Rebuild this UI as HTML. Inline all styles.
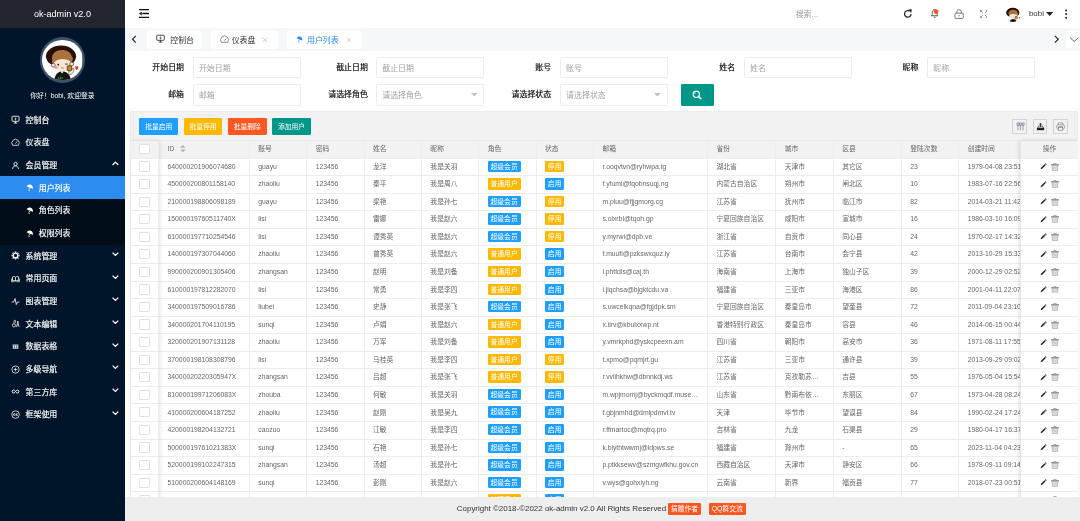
<!DOCTYPE html>
<html lang="zh-CN">
<head>
<meta charset="utf-8">
<title>ok-admin v2.0</title>
<style>
*{box-sizing:border-box;margin:0;padding:0}
html,body{width:1080px;height:521px;overflow:hidden;background:#fff}
body{font-family:"Liberation Sans","Noto Sans CJK SC",sans-serif;font-size:14px;color:#333;-webkit-font-smoothing:antialiased}
#app{position:absolute;left:0;top:0;width:1903px;height:918px;zoom:0.567525;overflow:hidden;background:#fff;will-change:transform}
i{font-style:normal}
/* ---------- sidebar ---------- */
#side{position:absolute;left:0;top:0;width:220px;height:918px;background:#001529;color:#fff}
#logo{position:absolute;left:0;top:0;width:220px;height:49px;line-height:51px;background:#23262e;text-align:center;font-size:16px;color:#fff}
#user{position:absolute;left:0;top:50px;width:220px;text-align:center}
#user .av{position:absolute;left:70px;top:16px;width:80px;height:80px;border-radius:50%;background:#3d5269;overflow:hidden}
#user .av svg{display:block;width:71px;height:71px;margin:4.5px;border-radius:50%}
#user p{position:absolute;left:0;top:108px;width:220px;font-size:12px;line-height:20px;color:#fff}
#nav{position:absolute;left:0;top:191px;width:220px;list-style:none}
#nav li{position:relative;height:40px;line-height:40px;font-size:14px;color:#fff;white-space:nowrap;-webkit-text-stroke:.3px #fff}
#nav li .mi{position:absolute;left:19.500px;top:12px;width:16px;height:16px}
#nav li .tx{position:absolute;left:45px;top:2px}
#nav li.sub{background:#000c17}
#nav li.sub .mi{left:46px;top:14px;width:13px;height:13px}
#nav li.sub .tx{left:68.200px}
#nav li.on{background:#2d8cf0}
#nav li .arr{position:absolute;left:197px;top:13px;width:12px;height:8px}
#nav svg{display:block;width:100%;height:100%}
/* ---------- header ---------- */
#head{position:absolute;left:220px;top:0;width:1683px;height:50px;background:#fff}
#head .h{position:absolute}
#head svg{display:block}
#search{left:1182px;top:15px;font-size:14px;line-height:20px;color:#999}
#uname{left:1593px;top:14px;font-size:14px;line-height:22px;color:#333}
/* ---------- tab bar ---------- */
#tabs{position:absolute;left:220px;top:49px;width:1683px;height:41px;background:#f5f7f9}
#tabs .tab{position:absolute;top:5px;height:32px;line-height:32px;background:#fff;border-radius:4px;font-size:14px;color:#333;white-space:nowrap}
#tabs .tab .ti{position:absolute;top:8px;width:16px;height:16px}
#tabs .tab .tt{position:absolute;top:2.300px}
#tabs .tab .tc{position:absolute;top:11px;width:10px;height:10px}
#tabs .tab.on{color:#2d8cf0}
#tabs .pg{position:absolute}
#tabs svg{display:block;width:100%;height:100%}
/* ---------- form ---------- */
#page{position:absolute;left:220px;top:90px;width:1683px;height:785px;background:#fff;overflow:hidden}
.fl{position:absolute;width:110px;height:38px;line-height:40.500px;padding-right:15.700px;text-align:right;font-size:14px;color:#000;-webkit-text-stroke:.25px #000;white-space:nowrap}
.fi{position:absolute;width:190px;height:38px;line-height:38.500px;border:1px solid #ededed;border-radius:2px;padding-left:8.800px;font-size:14px;color:#a3a3a3;background:#fff;white-space:nowrap}
.fi .car{position:absolute;right:10px;top:15px;width:12px;height:6px}
.fi .car svg{display:block;width:12px;height:6px}
#sbtn{position:absolute;left:980px;top:58px;width:58px;height:38px;background:#009688;border-radius:2px}
#sbtn svg{position:absolute;left:20px;top:10px;width:18px;height:18px}
/* ---------- table ---------- */
#tool{position:absolute;left:9px;top:106px;width:1671px;height:52.5px;background:#f2f2f2;border:1px solid #ebebeb}
.btn{position:absolute;top:9.500px;height:30px;line-height:30px;width:68px;text-align:center;font-size:12px;color:#fff;border-radius:2px;white-space:nowrap}
.tb{position:absolute;top:12px;width:26px;height:26px;border:1px solid #d4d4d4}
.tb svg{display:block;width:16px;height:16px;margin:4px}
#tw{position:absolute;left:9px;top:158.5px;width:1671px;height:640px;overflow:hidden;border-left:1px solid #ebebeb}
table.grid{border-collapse:separate;border-spacing:0;table-layout:fixed;width:0;font-size:12px;color:#666}
table.grid th,table.grid td{height:30.950px;border-right:1px solid #ededed;border-bottom:1px solid #ededed;padding:0;font-weight:400;text-align:left;overflow:hidden;background:#fff}
table.grid th{background:#f2f2f2;height:31px}
.cell{height:29px;line-height:28px;padding:0 15px;white-space:nowrap;overflow:hidden;text-overflow:ellipsis}
table.grid .c-chk{text-align:center;vertical-align:top}
.cb{display:block;width:18px;height:18px;margin:5px auto 0 15px;border:1px solid #e0e0e0;border-radius:2px;background:#fff}
.sort{display:inline-block;width:10px;height:13px;margin-left:10px;vertical-align:-2px}
.sort svg{display:block;width:10px;height:13px}
.tag{display:inline-block;height:20px;line-height:20px;padding:0 5px;font-size:12px;color:#fff;border-radius:2px;vertical-align:middle;margin-top:-2px}
.tag.blue{background:#1e9fff}
.tag.yel{background:#ffb800}
#fxl{position:absolute;left:9px;top:158.5px;width:51px;height:640px;box-shadow:1px 0 8px rgba(0,0,0,.1);pointer-events:none}
#fxr{position:absolute;left:1578px;top:158.5px;width:102px;height:640px;overflow:hidden;box-shadow:-1px 0 8px rgba(0,0,0,.12);background:#fff;border-left:1px solid #e6e6e6}
#fxr table.grid{width:101px}
#fxr .ops{text-align:left;padding:0 0 0 33px}
.ops svg{display:inline-block;vertical-align:middle;margin-top:-1px}
.ic-pen{width:12px;height:12px;margin-right:7px}
.ic-del{width:14px;height:14px}
/* ---------- footer ---------- */
#foot{position:absolute;left:220px;top:875px;width:1683px;height:43px;background:#eee;font-size:14px;color:#333;line-height:43px;white-space:nowrap}
#foot .cp{position:absolute;left:585px;top:1px}
#foot .fb{position:absolute;top:12px;height:20px;line-height:20px;font-size:12px;color:#fff;background:#ff5722;border-radius:2px;text-align:center}
</style>
</head>
<body>
<div id="app">

<!-- sidebar -->
<div id="side">
  <div id="logo">ok-admin v2.0</div>
  <div id="user">
    <div class="av">
      <svg viewBox="0 0 72 72">
        <rect width="72" height="72" fill="#fff"/>
        <ellipse cx="34" cy="29" rx="27" ry="19" fill="#2a0f08"/>
        <path d="M18 34c-2-20 34-22 36-2v10H18z" fill="#a8733f"/>
        <ellipse cx="37" cy="45" rx="17" ry="11" fill="#fbe6d5"/>
        <path d="M19 36c8-3 26-3 36 0v-5H19z" fill="#a8733f"/>
        <circle cx="20" cy="45" r="3.5" fill="#fbe6d5" stroke="#2a0f08" stroke-width="1"/>
        <circle cx="53" cy="43" r="3.5" fill="#fbe6d5" stroke="#2a0f08" stroke-width="1"/>
        <circle cx="29" cy="44" r="1.6" fill="#2a0f08"/>
        <path d="M41 43h5" stroke="#2a0f08" stroke-width="1.4"/>
        <ellipse cx="25" cy="49" rx="3" ry="2" fill="#f58a7a"/>
        <path d="M34 50h5" stroke="#7a3b2a" stroke-width="1"/>
        <path d="M22 72c1-11 8-16 14-16s14 4 16 16z" fill="#151515"/>
        <path d="M33 56l3 4 3-4z" fill="#fff"/>
        <rect x="45" y="46" width="8" height="9" rx="1" fill="#b88a2a" stroke="#3a2208" stroke-width="1.2"/>
        <path d="M48 56c3 0 7-2 7-6l2 1c0 8-4 11-9 11z" fill="#fbe6d5" stroke="#2a0f08" stroke-width=".8"/>
        <path d="M62 54c-3-3-4-6-2-7 1.500-.7 2 .5 2 1.500 0-1 1-2.200 2.300-1.500 2 1.200 0 4.500-2.300 7z" fill="#e8352b"/>
        <path d="M30 66v4M33 66v4M36 66v4" stroke="#3fae5a" stroke-width="1.4"/>
      </svg>
    </div>
    <p>你好！bobi, 欢迎登录</p>
  </div>
  <ul id="nav">
    <li><span class="mi"><svg viewBox="0 0 18 18" fill="none" stroke="#fff" stroke-width="1.7"><rect x="2" y="2.500" width="14" height="10" rx="1.500"/><path d="M5.500 16h7M9 12.500V16"/><path d="M9 5v4.500M7 7.500l2 2 2-2" stroke-width="1.300"/></svg></span><span class="tx">控制台</span></li>
    <li><span class="mi"><svg viewBox="0 0 18 18" fill="none" stroke="#fff" stroke-width="1.500"><path d="M3.300 14.500a7.300 7.300 0 1 1 11.400 0z"/><path d="M9 11l3.200-4.200" stroke-width="1.600"/></svg></span><span class="tx">仪表盘</span></li>
    <li><span class="mi"><svg viewBox="0 0 18 18" fill="none" stroke="#fff" stroke-width="1.700"><circle cx="9" cy="6" r="3.300"/><path d="M3.200 15.800c.5-4 2.800-6 5.800-6s5.300 2 5.800 6"/></svg></span><span class="tx">会员管理</span><span class="arr"><svg viewBox="0 0 12 8" fill="none" stroke="#fff" stroke-width="2.200"><path d="M1 7l5-5 5 5"/></svg></span></li>
    <li class="sub on"><span class="mi"><svg viewBox="0 0 14 14"><g transform="rotate(22 7 7)"><path d="M.5 7.500C1 3.500 3.800 1 7 1s6 2.500 6.500 6.500c-1.500-1.300-3-1.300-3.800 0-.8-1.300-4.600-1.300-5.400 0-.8-1.300-2.300-1.300-3.800 0z" fill="#fff"/><path d="M7 6v5.500c0 1.500 2 1.500 2.300.3" fill="none" stroke="#fff" stroke-width="1.300"/></g></svg></span><span class="tx">用户列表</span></li>
    <li class="sub"><span class="mi"><svg viewBox="0 0 14 14"><g transform="rotate(22 7 7)"><path d="M.5 7.500C1 3.500 3.800 1 7 1s6 2.500 6.500 6.500c-1.500-1.300-3-1.300-3.800 0-.8-1.300-4.600-1.300-5.400 0-.8-1.300-2.300-1.300-3.800 0z" fill="#fff"/><path d="M7 6v5.500c0 1.500 2 1.500 2.300.3" fill="none" stroke="#fff" stroke-width="1.300"/></g></svg></span><span class="tx">角色列表</span></li>
    <li class="sub"><span class="mi"><svg viewBox="0 0 14 14"><g transform="rotate(22 7 7)"><path d="M.5 7.500C1 3.500 3.800 1 7 1s6 2.500 6.500 6.500c-1.500-1.300-3-1.300-3.800 0-.8-1.300-4.600-1.300-5.400 0-.8-1.300-2.300-1.300-3.800 0z" fill="#fff"/><path d="M7 6v5.500c0 1.500 2 1.500 2.300.3" fill="none" stroke="#fff" stroke-width="1.300"/></g></svg></span><span class="tx">权限列表</span></li>
    <li><span class="mi"><svg viewBox="0 0 18 18" fill="none" stroke="#fff"><circle cx="9" cy="9" r="4.700" stroke-width="2.600"/><path d="M9 1v2.500M9 14.500V17M1 9h2.500M14.500 9H17M3.300 3.300l1.800 1.800M12.900 12.900l1.800 1.800M3.300 14.700l1.800-1.800M12.900 5.100l1.800-1.800" stroke-width="2.800"/></svg></span><span class="tx">系统管理</span><span class="arr"><svg viewBox="0 0 12 8" fill="none" stroke="#fff" stroke-width="2.200"><path d="M1 1l5 5 5-5"/></svg></span></li>
    <li><span class="mi"><svg viewBox="0 0 18 18" fill="none" stroke="#fff" stroke-width="1.600"><path d="M9 6.500c-1.300-1.800-4-2-6-.8v7.800c2-1 4.700-.8 6 .5 1.300-1.300 4-1.500 6-.5V5.700c-2-1.200-4.700-1-6 .8zM9 6.500v7.500"/><path d="M1 9v6.300h6.500M17 9v6.300h-6.500" stroke-width="1.300"/></svg></span><span class="tx">常用页面</span><span class="arr"><svg viewBox="0 0 12 8" fill="none" stroke="#fff" stroke-width="2.200"><path d="M1 1l5 5 5-5"/></svg></span></li>
    <li><span class="mi"><svg viewBox="0 0 18 18" fill="none" stroke="#fff" stroke-width="1.600"><path d="M1.500 10h4l2.500-7 2.500 12 2-5h4"/></svg></span><span class="tx">图表管理</span><span class="arr"><svg viewBox="0 0 12 8" fill="none" stroke="#fff" stroke-width="2.200"><path d="M1 1l5 5 5-5"/></svg></span></li>
    <li><span class="mi"><svg viewBox="0 0 18 18" fill="none" stroke="#fff" stroke-width="1.400"><circle cx="6" cy="12.500" r="3.300"/><path d="M6 9.200V4c0-2 3-2 3 0v3"/><path d="M11 16l2.500-12 2.500 12M12 12h3"/></svg></span><span class="tx">文本编辑</span><span class="arr"><svg viewBox="0 0 12 8" fill="none" stroke="#fff" stroke-width="2.200"><path d="M1 1l5 5 5-5"/></svg></span></li>
    <li><span class="mi"><svg viewBox="0 0 18 18" fill="#d4d8e2"><path d="M3 4.500h12v9.500H3zM6.700 6v6.500M11.300 6v6.500" stroke="#001529" stroke-width="1"/></svg></span><span class="tx">数据表格</span><span class="arr"><svg viewBox="0 0 12 8" fill="none" stroke="#fff" stroke-width="2.200"><path d="M1 1l5 5 5-5"/></svg></span></li>
    <li><span class="mi"><svg viewBox="0 0 18 18" fill="none" stroke="#fff" stroke-width="1.500"><circle cx="9" cy="9" r="7.200"/><path d="M9 5.500v7M5.500 9h7"/></svg></span><span class="tx">多级导航</span><span class="arr"><svg viewBox="0 0 12 8" fill="none" stroke="#fff" stroke-width="2.200"><path d="M1 1l5 5 5-5"/></svg></span></li>
    <li><span class="mi"><svg viewBox="-1.500 -1.500 21 21" fill="none" stroke="#fff" stroke-width="2.300"><path d="M9 9c-1.500-2.500-3-3.300-4.500-3.300a3.300 3.300 0 0 0 0 6.600c1.500 0 3-.8 4.500-3.300zm0 0c1.500 2.500 3 3.300 4.500 3.300a3.300 3.300 0 0 0 0-6.600c-1.500 0-3 .8-4.500 3.300z"/></svg></span><span class="tx">第三方库</span><span class="arr"><svg viewBox="0 0 12 8" fill="none" stroke="#fff" stroke-width="2.200"><path d="M1 1l5 5 5-5"/></svg></span></li>
    <li><span class="mi"><svg viewBox="0 0 18 18" fill="none" stroke="#fff" stroke-width="1.500"><circle cx="9" cy="9" r="7.500"/><circle cx="6.500" cy="9" r="1.800"/><path d="M10.500 6.500v5M13.500 7l-2.500 2.200 2.500 2.300"/></svg></span><span class="tx">框架使用</span><span class="arr"><svg viewBox="0 0 12 8" fill="none" stroke="#fff" stroke-width="2.200"><path d="M1 1l5 5 5-5"/></svg></span></li>
  </ul>
</div>

<!-- header -->
<div id="head">
  <div class="h" style="left:24.500px;top:16px;width:18px;height:16px"><svg viewBox="0 0 18 16" width="18" height="16"><path d="M0 1.200h18M6 8H18M0 14.800h18" stroke="#111" stroke-width="2.400" fill="none"/><path d="M0 8l4.800-3.500v7z" fill="#111"/></svg></div>
  <div class="h" id="search">搜索...</div>
  <div class="h" style="left:1370.500px;top:16px;width:17px;height:17px"><svg viewBox="0 0 17 17" width="17" height="17"><path d="M14.300 9A5.800 5.800 0 1 1 11.500 3.600" fill="none" stroke="#1a1a1a" stroke-width="2.100"/><path d="M9.300 0.300l6.200 .6-1.200 6z" fill="#1a1a1a"/></svg></div>
  <div class="h" style="left:1417px;top:13px;width:20px;height:21px"><svg viewBox="0 0 20 21" width="20" height="21"><path d="M4.500 15.500c1.300-1.500 1.500-3 1.500-6C6 6.500 7.800 4.300 10 4.300s4 2.200 4 5.200c0 3 .2 4.500 1.500 6z" fill="none" stroke="#333" stroke-width="1.400"/><path d="M8.200 17.500c.5 1.600 3.100 1.600 3.600 0" fill="none" stroke="#333" stroke-width="1.400"/><circle cx="12.600" cy="8.300" r="4.200" fill="#ff5722"/></svg></div>
  <div class="h" style="left:1461px;top:15px;width:18px;height:18px"><svg viewBox="0 0 18 19" width="18" height="18"><rect x="1.200" y="7.800" width="15.600" height="9.800" rx="1.800" fill="none" stroke="#444" stroke-width="1.300"/><path d="M4.800 7.800V5.500a4.200 4.200 0 0 1 8.400 0v2.300" fill="none" stroke="#444" stroke-width="1.300"/><path d="M7.500 12.700h3" stroke="#444" stroke-width="1.300"/></svg></div>
  <div class="h" style="left:1506px;top:17px;width:14px;height:14px"><svg viewBox="0 0 14 14" width="14" height="14"><path d="M1 1l4.300 4.300M13 1L8.700 5.300M1 13l4.300-4.300M13 13L8.700 8.700" fill="none" stroke="#959cae" stroke-width="1.700"/><path d="M0 0h4.500L0 4.500zM14 0h-4.500l4.500 4.500zM0 14h4.500L0 9.500zM14 14h-4.500l4.500-4.500z" fill="#959cae"/></svg></div>
  <div class="h" style="left:1550px;top:10.500px;width:29px;height:29px;border-radius:50%;overflow:hidden"><svg viewBox="0 0 72 72" width="29" height="29">
        <rect width="72" height="72" fill="#fff"/>
        <ellipse cx="34" cy="29" rx="29" ry="21" fill="#2a0f08"/>
        <path d="M16 34c-2-22 38-24 40-2v10H16z" fill="#a8733f"/>
        <ellipse cx="37" cy="46" rx="18" ry="12" fill="#fbe6d5"/>
        <path d="M17 37c8-3 28-3 40 0v-6H17z" fill="#a8733f"/>
        <path d="M20 72c1-11 8-15 16-15s14 4 16 15z" fill="#151515"/>
        <rect x="44" y="46" width="10" height="10" rx="1" fill="#b88a2a" stroke="#3a2208" stroke-width="1.500"/>
        <circle cx="64" cy="52" r="4" fill="#e8352b"/>
  </svg></div>
  <div class="h" id="uname">bobi</div>
  <div class="h" style="left:1623.500px;top:21px;width:13px;height:7px"><svg viewBox="0 0 13 7" width="13" height="7"><path d="M0 0h13L6.500 7z" fill="#222"/></svg></div>
  <div class="h" style="left:1657px;top:16px;width:4px;height:18px"><svg viewBox="0 0 4 18" width="4" height="18"><circle cx="2" cy="2.500" r="1.800" fill="#222"/><circle cx="2" cy="9" r="1.800" fill="#222"/><circle cx="2" cy="15.500" r="1.800" fill="#222"/></svg></div>
</div>

<!-- tabs -->
<div id="tabs">
  <div class="pg" style="left:10px;top:13px;width:10px;height:15px"><svg viewBox="0 0 10 15" fill="none" stroke="#222" stroke-width="2"><path d="M8.500 1.500L2.500 7.500 8.500 13.500"/></svg></div>
  <div class="tab" style="left:39px;width:97px">
    <span class="ti" style="left:16.500px;top:6.500px"><svg viewBox="0 0 18 18" fill="none" stroke="#222" stroke-width="1.600"><rect x="1.500" y="2.500" width="15" height="10" rx="1.500"/><path d="M5.500 16h7M9 12.500V16"/><path d="M9 5v4.500M7 7.500l2 2 2-2" stroke-width="1.300"/></svg></span>
    <span class="tt" style="left:41px">控制台</span>
  </div>
  <div class="tab" style="left:151px;width:119px">
    <span class="ti" style="left:16px"><svg viewBox="0 0 18 18" fill="none" stroke="#555" stroke-width="1.300"><path d="M2.800 14.500a7.800 7.800 0 1 1 12.400 0z"/><path d="M9 11.500l3.500-4.500" stroke-width="1.500"/></svg></span>
    <span class="tt" style="left:37.300px">仪表盘</span>
    <span class="tc" style="left:90px"><svg viewBox="0 0 10 10" stroke="#c2c2c2" stroke-width="1.300"><path d="M1 1l8 8M9 1l-8 8"/></svg></span>
  </div>
  <div class="tab on" style="left:285px;width:133px">
    <span class="ti" style="left:17px;top:10px;width:12px;height:12px"><svg viewBox="0 0 14 14"><g transform="rotate(22 7 7)"><path d="M.5 7.500C1 3.500 3.800 1 7 1s6 2.500 6.500 6.500c-1.500-1.300-3-1.300-3.800 0-.8-1.300-4.600-1.300-5.400 0-.8-1.300-2.300-1.300-3.800 0z" fill="#2d8cf0"/><path d="M7 6v5.500c0 1.500 2 1.500 2.300.3" fill="none" stroke="#2d8cf0" stroke-width="1.300"/></g></svg></span>
    <span class="tt" style="left:36px">用户列表</span>
    <span class="tc" style="left:104px"><svg viewBox="0 0 10 10" stroke="#c2c2c2" stroke-width="1.300"><path d="M1 1l8 8M9 1l-8 8"/></svg></span>
  </div>
  <div class="pg" style="left:1637px;top:13px;width:10px;height:15px"><svg viewBox="0 0 10 15" fill="none" stroke="#222" stroke-width="2"><path d="M1.500 1.500L7.500 7.500 1.500 13.500"/></svg></div>
  <div class="pg" style="left:1658px;top:5px;width:30px;height:30px;background:#fff;border-radius:4px 0 0 4px"><svg viewBox="0 0 30 30" fill="none" stroke="#444" stroke-width="1.500"><path d="M7 11.500l7.500 7 7.500-7"/></svg></div>
</div>

<!-- page -->
<div id="page">
  <div class="fl" style="left:10px;top:10px">开始日期</div><div class="fi" style="left:120px;top:10px">开始日期</div>
  <div class="fl" style="left:334px;top:10px">截止日期</div><div class="fi" style="left:443px;top:10px">截止日期</div>
  <div class="fl" style="left:657px;top:10px">账号</div><div class="fi" style="left:767px;top:10px">账号</div>
  <div class="fl" style="left:981px;top:10px">姓名</div><div class="fi" style="left:1091px;top:10px">姓名</div>
  <div class="fl" style="left:1304px;top:10px">昵称</div><div class="fi" style="left:1414px;top:10px">昵称</div>

  <div class="fl" style="left:10px;top:58px">邮箱</div><div class="fi" style="left:120px;top:58px">邮箱</div>
  <div class="fl" style="left:334px;top:58px">请选择角色</div><div class="fi" style="left:443px;top:58px">请选择角色<i class="car"><svg viewBox="0 0 12 6"><path d="M0 0h12L6 6z" fill="#c2c2c2"/></svg></i></div>
  <div class="fl" style="left:657px;top:58px">请选择状态</div><div class="fi" style="left:767px;top:58px">请选择状态<i class="car"><svg viewBox="0 0 12 6"><path d="M0 0h12L6 6z" fill="#c2c2c2"/></svg></i></div>
  <div id="sbtn"><svg viewBox="0 0 18 18" fill="none" stroke="#fff" stroke-width="2"><circle cx="7.500" cy="7.500" r="5.500"/><path d="M11.500 11.500l5 5" stroke-width="2.600"/><path d="M4.500 7a3 3 0 0 1 2.500-2.500" stroke-width="1.200"/></svg></div>

  <div id="tool">
    <div class="btn" style="left:15px;background:#1e9fff">批量启用</div>
    <div class="btn" style="left:93px;background:#ffb800">批量停用</div>
    <div class="btn" style="left:171px;background:#ff5722">批量删除</div>
    <div class="btn" style="left:249px;background:#009688">添加用户</div>
    <div class="tb" style="left:1553px"><svg viewBox="0 0 16 16" fill="none" stroke="#6a5a7a" stroke-width="1"><path d="M3.500 6v8.500M8 6v8.500M12.500 6v8.500"/><rect x="1.800" y="1.800" width="3.400" height="4.200"/><rect x="6.300" y="1.800" width="3.400" height="4.200"/><rect x="10.800" y="1.800" width="3.400" height="4.200"/></svg></div>
    <div class="tb" style="left:1589px"><svg viewBox="0 0 16 16"><path d="M1.500 10h13v4.500h-13z" fill="#222"/><path d="M3 10l2-3h6l2 3" fill="none" stroke="#222" stroke-width="1.200"/><path d="M8 8.500V2.500M5.800 4.500L8 2l2.200 2.500" fill="none" stroke="#222" stroke-width="1.500"/></svg></div>
    <div class="tb" style="left:1625px"><svg viewBox="0 0 16 16" fill="none" stroke="#7a7a7a" stroke-width="1.100"><path d="M4 5V1.500h8V5"/><rect x="1.200" y="5" width="13.600" height="7" rx="2"/><rect x="4" y="9.500" width="8" height="5" fill="#f2f2f2"/><path d="M4 8h8"/></svg></div>
  </div>

  <div id="tw"><table class="grid"><colgroup><col style="width:49.5px"><col style="width:160px"><col style="width:101.05px"><col style="width:101.05px"><col style="width:101.05px"><col style="width:101.05px"><col style="width:101.05px"><col style="width:101.05px"><col style="width:201px"><col style="width:120.3px"><col style="width:101.3px"><col style="width:120px"><col style="width:101.2px"><col style="width:160px"></colgroup><thead><tr><th class="c-chk"><i class="cb"></i></th><th><div class="cell">ID<span class="sort"><svg viewBox="0 0 10 13"><path d="M0 5L5 0l5 5zM0 8l5 5 5-5z" fill="#b2b2b2"/></svg></span></div></th><th><div class="cell">账号</div></th><th><div class="cell">密码</div></th><th><div class="cell">姓名</div></th><th><div class="cell">昵称</div></th><th><div class="cell">角色</div></th><th><div class="cell">状态</div></th><th><div class="cell">邮箱</div></th><th><div class="cell">省份</div></th><th><div class="cell">城市</div></th><th><div class="cell">区县</div></th><th><div class="cell">登陆次数</div></th><th><div class="cell">创建时间</div></th></tr></thead><tbody><tr><td class="c-chk"><i class="cb"></i></td><td><div class="cell">640000201906074680</div></td><td><div class="cell">guayu</div></td><td><div class="cell">123456</div></td><td><div class="cell">龙洋</div></td><td><div class="cell">我是关羽</div></td><td><div class="cell"><span class="tag blue">超级会员</span></div></td><td><div class="cell"><span class="tag yel">停用</span></div></td><td><div class="cell">r.ooqvtvn@ryhwpa.tg</div></td><td><div class="cell">湖北省</div></td><td><div class="cell">天津市</div></td><td><div class="cell">其它区</div></td><td><div class="cell">23</div></td><td><div class="cell">1979-04-08 23:51</div></td></tr>
<tr><td class="c-chk"><i class="cb"></i></td><td><div class="cell">450000200801158140</div></td><td><div class="cell">zhaoliu</div></td><td><div class="cell">123456</div></td><td><div class="cell">秦平</div></td><td><div class="cell">我是周八</div></td><td><div class="cell"><span class="tag yel">普通用户</span></div></td><td><div class="cell"><span class="tag blue">启用</span></div></td><td><div class="cell">f.yfumi@fqobnsuqj.ng</div></td><td><div class="cell">内蒙古自治区</div></td><td><div class="cell">朔州市</div></td><td><div class="cell">闸北区</div></td><td><div class="cell">10</div></td><td><div class="cell">1983-07-16 22:56</div></td></tr>
<tr><td class="c-chk"><i class="cb"></i></td><td><div class="cell">210000198806098189</div></td><td><div class="cell">guayu</div></td><td><div class="cell">123456</div></td><td><div class="cell">梁艳</div></td><td><div class="cell">我是孙七</div></td><td><div class="cell"><span class="tag blue">超级会员</span></div></td><td><div class="cell"><span class="tag yel">停用</span></div></td><td><div class="cell">m.pluu@fjjgmorg.cg</div></td><td><div class="cell">江苏省</div></td><td><div class="cell">抚州市</div></td><td><div class="cell">临江市</div></td><td><div class="cell">82</div></td><td><div class="cell">2014-03-21 11:42</div></td></tr>
<tr><td class="c-chk"><i class="cb"></i></td><td><div class="cell">15000019760511740X</div></td><td><div class="cell">lisi</div></td><td><div class="cell">123456</div></td><td><div class="cell">雷娜</div></td><td><div class="cell">我是赵六</div></td><td><div class="cell"><span class="tag blue">超级会员</span></div></td><td><div class="cell"><span class="tag yel">停用</span></div></td><td><div class="cell">s.oixrbl@tqoh.gp</div></td><td><div class="cell">宁夏回族自治区</div></td><td><div class="cell">咸阳市</div></td><td><div class="cell">宣城市</div></td><td><div class="cell">16</div></td><td><div class="cell">1986-03-10 16:09</div></td></tr>
<tr><td class="c-chk"><i class="cb"></i></td><td><div class="cell">610000197710254546</div></td><td><div class="cell">lisi</div></td><td><div class="cell">123456</div></td><td><div class="cell">谭秀英</div></td><td><div class="cell">我是赵六</div></td><td><div class="cell"><span class="tag blue">超级会员</span></div></td><td><div class="cell"><span class="tag yel">停用</span></div></td><td><div class="cell">y.myrwi@dpb.ve</div></td><td><div class="cell">浙江省</div></td><td><div class="cell">自贡市</div></td><td><div class="cell">同心县</div></td><td><div class="cell">24</div></td><td><div class="cell">1970-02-17 14:32</div></td></tr>
<tr><td class="c-chk"><i class="cb"></i></td><td><div class="cell">140000197307044060</div></td><td><div class="cell">zhaoliu</div></td><td><div class="cell">123456</div></td><td><div class="cell">曾秀英</div></td><td><div class="cell">我是赵六</div></td><td><div class="cell"><span class="tag yel">普通用户</span></div></td><td><div class="cell"><span class="tag blue">启用</span></div></td><td><div class="cell">f.muufi@pzkswxquz.ly</div></td><td><div class="cell">江苏省</div></td><td><div class="cell">台南市</div></td><td><div class="cell">会宁县</div></td><td><div class="cell">42</div></td><td><div class="cell">2013-10-29 15:33</div></td></tr>
<tr><td class="c-chk"><i class="cb"></i></td><td><div class="cell">990000200901305406</div></td><td><div class="cell">zhangsan</div></td><td><div class="cell">123456</div></td><td><div class="cell">赵明</div></td><td><div class="cell">我是刘备</div></td><td><div class="cell"><span class="tag yel">普通用户</span></div></td><td><div class="cell"><span class="tag blue">启用</span></div></td><td><div class="cell">i.phttdls@caj.th</div></td><td><div class="cell">海南省</div></td><td><div class="cell">上海市</div></td><td><div class="cell">独山子区</div></td><td><div class="cell">39</div></td><td><div class="cell">2000-12-29 02:52</div></td></tr>
<tr><td class="c-chk"><i class="cb"></i></td><td><div class="cell">610000197812282070</div></td><td><div class="cell">lisi</div></td><td><div class="cell">123456</div></td><td><div class="cell">常勇</div></td><td><div class="cell">我是李四</div></td><td><div class="cell"><span class="tag yel">普通用户</span></div></td><td><div class="cell"><span class="tag blue">启用</span></div></td><td><div class="cell">i.jiqchsa@bjgktcdu.va</div></td><td><div class="cell">福建省</div></td><td><div class="cell">三亚市</div></td><td><div class="cell">海港区</div></td><td><div class="cell">86</div></td><td><div class="cell">2001-04-11 22:07</div></td></tr>
<tr><td class="c-chk"><i class="cb"></i></td><td><div class="cell">340000197509016786</div></td><td><div class="cell">liubei</div></td><td><div class="cell">123456</div></td><td><div class="cell">史静</div></td><td><div class="cell">我是张飞</div></td><td><div class="cell"><span class="tag blue">超级会员</span></div></td><td><div class="cell"><span class="tag blue">启用</span></div></td><td><div class="cell">s.uwcelkqna@fgjdpk.sm</div></td><td><div class="cell">宁夏回族自治区</div></td><td><div class="cell">秦皇岛市</div></td><td><div class="cell">望奎县</div></td><td><div class="cell">72</div></td><td><div class="cell">2011-09-04 23:10</div></td></tr>
<tr><td class="c-chk"><i class="cb"></i></td><td><div class="cell">340000201704110195</div></td><td><div class="cell">sunqi</div></td><td><div class="cell">123456</div></td><td><div class="cell">卢娟</div></td><td><div class="cell">我是赵六</div></td><td><div class="cell"><span class="tag yel">普通用户</span></div></td><td><div class="cell"><span class="tag blue">启用</span></div></td><td><div class="cell">x.iirv@kbulxxwp.nt</div></td><td><div class="cell">香港特别行政区</div></td><td><div class="cell">秦皇岛市</div></td><td><div class="cell">容县</div></td><td><div class="cell">46</div></td><td><div class="cell">2014-06-15 00:44</div></td></tr>
<tr><td class="c-chk"><i class="cb"></i></td><td><div class="cell">320000201907131128</div></td><td><div class="cell">zhaoliu</div></td><td><div class="cell">123456</div></td><td><div class="cell">万军</div></td><td><div class="cell">我是刘备</div></td><td><div class="cell"><span class="tag yel">普通用户</span></div></td><td><div class="cell"><span class="tag blue">启用</span></div></td><td><div class="cell">y.vmrkphd@yskcpeexn.am</div></td><td><div class="cell">四川省</div></td><td><div class="cell">朝阳市</div></td><td><div class="cell">高安市</div></td><td><div class="cell">36</div></td><td><div class="cell">1971-08-11 17:55</div></td></tr>
<tr><td class="c-chk"><i class="cb"></i></td><td><div class="cell">370000198108308796</div></td><td><div class="cell">lisi</div></td><td><div class="cell">123456</div></td><td><div class="cell">马桂英</div></td><td><div class="cell">我是李四</div></td><td><div class="cell"><span class="tag yel">普通用户</span></div></td><td><div class="cell"><span class="tag yel">停用</span></div></td><td><div class="cell">t.xpmo@pqmjrt.gu</div></td><td><div class="cell">江苏省</div></td><td><div class="cell">三亚市</div></td><td><div class="cell">通许县</div></td><td><div class="cell">39</div></td><td><div class="cell">2013-09-29 09:02</div></td></tr>
<tr><td class="c-chk"><i class="cb"></i></td><td><div class="cell">34000020220305947X</div></td><td><div class="cell">zhangsan</div></td><td><div class="cell">123456</div></td><td><div class="cell">吕超</div></td><td><div class="cell">我是张飞</div></td><td><div class="cell"><span class="tag yel">普通用户</span></div></td><td><div class="cell"><span class="tag yel">停用</span></div></td><td><div class="cell">r.vviihkhw@dbnnkdj.ws</div></td><td><div class="cell">江苏省</div></td><td><div class="cell">克孜勒苏柯尔克孜自治州</div></td><td><div class="cell">吉县</div></td><td><div class="cell">55</div></td><td><div class="cell">1976-05-04 15:54</div></td></tr>
<tr><td class="c-chk"><i class="cb"></i></td><td><div class="cell">81000019971206083X</div></td><td><div class="cell">zhouba</div></td><td><div class="cell">123456</div></td><td><div class="cell">何敏</div></td><td><div class="cell">我是关羽</div></td><td><div class="cell"><span class="tag blue">超级会员</span></div></td><td><div class="cell"><span class="tag blue">启用</span></div></td><td><div class="cell">m.wpjmomj@byckmqdf.museum</div></td><td><div class="cell">山东省</div></td><td><div class="cell">黔南布依族苗族自治州</div></td><td><div class="cell">东丽区</div></td><td><div class="cell">67</div></td><td><div class="cell">1973-04-28 08:24</div></td></tr>
<tr><td class="c-chk"><i class="cb"></i></td><td><div class="cell">410000200604187252</div></td><td><div class="cell">zhaoliu</div></td><td><div class="cell">123456</div></td><td><div class="cell">赵刚</div></td><td><div class="cell">我是吴九</div></td><td><div class="cell"><span class="tag blue">超级会员</span></div></td><td><div class="cell"><span class="tag blue">启用</span></div></td><td><div class="cell">f.gbjnmhd@dmlpdmvl.tv</div></td><td><div class="cell">天津</div></td><td><div class="cell">毕节市</div></td><td><div class="cell">望谟县</div></td><td><div class="cell">84</div></td><td><div class="cell">1990-02-24 17:24</div></td></tr>
<tr><td class="c-chk"><i class="cb"></i></td><td><div class="cell">420000198204132721</div></td><td><div class="cell">caozuo</div></td><td><div class="cell">123456</div></td><td><div class="cell">江敏</div></td><td><div class="cell">我是李四</div></td><td><div class="cell"><span class="tag blue">超级会员</span></div></td><td><div class="cell"><span class="tag blue">启用</span></div></td><td><div class="cell">r.ffmartoc@mqtrq.pro</div></td><td><div class="cell">吉林省</div></td><td><div class="cell">九龙</div></td><td><div class="cell">石渠县</div></td><td><div class="cell">29</div></td><td><div class="cell">1980-04-17 16:37</div></td></tr>
<tr><td class="c-chk"><i class="cb"></i></td><td><div class="cell">50000019761021383X</div></td><td><div class="cell">sunqi</div></td><td><div class="cell">123456</div></td><td><div class="cell">石艳</div></td><td><div class="cell">我是孙七</div></td><td><div class="cell"><span class="tag blue">超级会员</span></div></td><td><div class="cell"><span class="tag blue">启用</span></div></td><td><div class="cell">k.biythtwwmj@ldpws.se</div></td><td><div class="cell">福建省</div></td><td><div class="cell">滁州市</div></td><td><div class="cell">-</div></td><td><div class="cell">65</div></td><td><div class="cell">2023-11-04 04:23</div></td></tr>
<tr><td class="c-chk"><i class="cb"></i></td><td><div class="cell">520000199102247315</div></td><td><div class="cell">zhangsan</div></td><td><div class="cell">123456</div></td><td><div class="cell">汤超</div></td><td><div class="cell">我是孙七</div></td><td><div class="cell"><span class="tag blue">超级会员</span></div></td><td><div class="cell"><span class="tag blue">启用</span></div></td><td><div class="cell">p.ptkksewv@szmgwfkhu.gov.cn</div></td><td><div class="cell">西藏自治区</div></td><td><div class="cell">天津市</div></td><td><div class="cell">静安区</div></td><td><div class="cell">66</div></td><td><div class="cell">1978-09-11 09:14</div></td></tr>
<tr><td class="c-chk"><i class="cb"></i></td><td><div class="cell">510000200604148169</div></td><td><div class="cell">sunqi</div></td><td><div class="cell">123456</div></td><td><div class="cell">彭刚</div></td><td><div class="cell">我是赵六</div></td><td><div class="cell"><span class="tag blue">超级会员</span></div></td><td><div class="cell"><span class="tag blue">启用</span></div></td><td><div class="cell">v.wys@gohxiyh.ng</div></td><td><div class="cell">云南省</div></td><td><div class="cell">新界</div></td><td><div class="cell">福贡县</div></td><td><div class="cell">77</div></td><td><div class="cell">2018-07-23 00:51</div></td></tr>
<tr><td class="c-chk"><i class="cb"></i></td><td><div class="cell"></div></td><td><div class="cell"></div></td><td><div class="cell"></div></td><td><div class="cell"></div></td><td><div class="cell"></div></td><td><div class="cell"><span class="tag yel">普通用户</span></div></td><td><div class="cell"><span class="tag blue">启用</span></div></td><td><div class="cell"></div></td><td><div class="cell"></div></td><td><div class="cell"></div></td><td><div class="cell"></div></td><td><div class="cell"></div></td><td><div class="cell"></div></td></tr></tbody></table></div>
  <div id="fxl"></div>
  <div id="fxr"><table class="grid fx"><thead><tr><th><div class="cell" style="text-align:center">操作</div></th></tr></thead><tbody><tr><td><div class="cell ops"><svg class="ic-pen" viewBox="0 0 16 16"><path d="M1.5 14.5l.9-3.6 8.2-8.2 2.7 2.7-8.2 8.2zM11.4 1.9l1-1a.8.8 0 0 1 1.1 0l1.6 1.6a.8.8 0 0 1 0 1.1l-1 1z" fill="#222"/></svg><svg class="ic-del" viewBox="0 0 14 14"><path d="M1.800 4h10.400l-.7 9.500h-9z" fill="#eaeaea" stroke="#a2a2a2" stroke-width="1.200"/><path d="M0 3h14" stroke="#8c8c8c" stroke-width="2"/><path d="M4.800 2.500V.8h4.400v1.700" fill="none" stroke="#8c8c8c" stroke-width="1.200"/><path d="M5.200 6v5.500M8.800 6v5.500" stroke="#a8a8a8" stroke-width="1.200"/></svg></div></td></tr>
<tr><td><div class="cell ops"><svg class="ic-pen" viewBox="0 0 16 16"><path d="M1.5 14.5l.9-3.6 8.2-8.2 2.7 2.7-8.2 8.2zM11.4 1.9l1-1a.8.8 0 0 1 1.1 0l1.6 1.6a.8.8 0 0 1 0 1.1l-1 1z" fill="#222"/></svg><svg class="ic-del" viewBox="0 0 14 14"><path d="M1.800 4h10.400l-.7 9.500h-9z" fill="#eaeaea" stroke="#a2a2a2" stroke-width="1.200"/><path d="M0 3h14" stroke="#8c8c8c" stroke-width="2"/><path d="M4.800 2.500V.8h4.400v1.700" fill="none" stroke="#8c8c8c" stroke-width="1.200"/><path d="M5.200 6v5.500M8.800 6v5.500" stroke="#a8a8a8" stroke-width="1.200"/></svg></div></td></tr>
<tr><td><div class="cell ops"><svg class="ic-pen" viewBox="0 0 16 16"><path d="M1.5 14.5l.9-3.6 8.2-8.2 2.7 2.7-8.2 8.2zM11.4 1.9l1-1a.8.8 0 0 1 1.1 0l1.6 1.6a.8.8 0 0 1 0 1.1l-1 1z" fill="#222"/></svg><svg class="ic-del" viewBox="0 0 14 14"><path d="M1.800 4h10.400l-.7 9.500h-9z" fill="#eaeaea" stroke="#a2a2a2" stroke-width="1.200"/><path d="M0 3h14" stroke="#8c8c8c" stroke-width="2"/><path d="M4.800 2.500V.8h4.400v1.700" fill="none" stroke="#8c8c8c" stroke-width="1.200"/><path d="M5.200 6v5.500M8.800 6v5.500" stroke="#a8a8a8" stroke-width="1.200"/></svg></div></td></tr>
<tr><td><div class="cell ops"><svg class="ic-pen" viewBox="0 0 16 16"><path d="M1.5 14.5l.9-3.6 8.2-8.2 2.7 2.7-8.2 8.2zM11.4 1.9l1-1a.8.8 0 0 1 1.1 0l1.6 1.6a.8.8 0 0 1 0 1.1l-1 1z" fill="#222"/></svg><svg class="ic-del" viewBox="0 0 14 14"><path d="M1.800 4h10.400l-.7 9.500h-9z" fill="#eaeaea" stroke="#a2a2a2" stroke-width="1.200"/><path d="M0 3h14" stroke="#8c8c8c" stroke-width="2"/><path d="M4.800 2.500V.8h4.400v1.700" fill="none" stroke="#8c8c8c" stroke-width="1.200"/><path d="M5.200 6v5.500M8.800 6v5.500" stroke="#a8a8a8" stroke-width="1.200"/></svg></div></td></tr>
<tr><td><div class="cell ops"><svg class="ic-pen" viewBox="0 0 16 16"><path d="M1.5 14.5l.9-3.6 8.2-8.2 2.7 2.7-8.2 8.2zM11.4 1.9l1-1a.8.8 0 0 1 1.1 0l1.6 1.6a.8.8 0 0 1 0 1.1l-1 1z" fill="#222"/></svg><svg class="ic-del" viewBox="0 0 14 14"><path d="M1.800 4h10.400l-.7 9.500h-9z" fill="#eaeaea" stroke="#a2a2a2" stroke-width="1.200"/><path d="M0 3h14" stroke="#8c8c8c" stroke-width="2"/><path d="M4.800 2.500V.8h4.400v1.700" fill="none" stroke="#8c8c8c" stroke-width="1.200"/><path d="M5.200 6v5.500M8.800 6v5.500" stroke="#a8a8a8" stroke-width="1.200"/></svg></div></td></tr>
<tr><td><div class="cell ops"><svg class="ic-pen" viewBox="0 0 16 16"><path d="M1.5 14.5l.9-3.6 8.2-8.2 2.7 2.7-8.2 8.2zM11.4 1.9l1-1a.8.8 0 0 1 1.1 0l1.6 1.6a.8.8 0 0 1 0 1.1l-1 1z" fill="#222"/></svg><svg class="ic-del" viewBox="0 0 14 14"><path d="M1.800 4h10.400l-.7 9.500h-9z" fill="#eaeaea" stroke="#a2a2a2" stroke-width="1.200"/><path d="M0 3h14" stroke="#8c8c8c" stroke-width="2"/><path d="M4.800 2.500V.8h4.400v1.700" fill="none" stroke="#8c8c8c" stroke-width="1.200"/><path d="M5.200 6v5.500M8.800 6v5.500" stroke="#a8a8a8" stroke-width="1.200"/></svg></div></td></tr>
<tr><td><div class="cell ops"><svg class="ic-pen" viewBox="0 0 16 16"><path d="M1.5 14.5l.9-3.6 8.2-8.2 2.7 2.7-8.2 8.2zM11.4 1.9l1-1a.8.8 0 0 1 1.1 0l1.6 1.6a.8.8 0 0 1 0 1.1l-1 1z" fill="#222"/></svg><svg class="ic-del" viewBox="0 0 14 14"><path d="M1.800 4h10.400l-.7 9.500h-9z" fill="#eaeaea" stroke="#a2a2a2" stroke-width="1.200"/><path d="M0 3h14" stroke="#8c8c8c" stroke-width="2"/><path d="M4.800 2.500V.8h4.400v1.700" fill="none" stroke="#8c8c8c" stroke-width="1.200"/><path d="M5.200 6v5.500M8.800 6v5.500" stroke="#a8a8a8" stroke-width="1.200"/></svg></div></td></tr>
<tr><td><div class="cell ops"><svg class="ic-pen" viewBox="0 0 16 16"><path d="M1.5 14.5l.9-3.6 8.2-8.2 2.7 2.7-8.2 8.2zM11.4 1.9l1-1a.8.8 0 0 1 1.1 0l1.6 1.6a.8.8 0 0 1 0 1.1l-1 1z" fill="#222"/></svg><svg class="ic-del" viewBox="0 0 14 14"><path d="M1.800 4h10.400l-.7 9.500h-9z" fill="#eaeaea" stroke="#a2a2a2" stroke-width="1.200"/><path d="M0 3h14" stroke="#8c8c8c" stroke-width="2"/><path d="M4.800 2.500V.8h4.400v1.700" fill="none" stroke="#8c8c8c" stroke-width="1.200"/><path d="M5.200 6v5.500M8.800 6v5.500" stroke="#a8a8a8" stroke-width="1.200"/></svg></div></td></tr>
<tr><td><div class="cell ops"><svg class="ic-pen" viewBox="0 0 16 16"><path d="M1.5 14.5l.9-3.6 8.2-8.2 2.7 2.7-8.2 8.2zM11.4 1.9l1-1a.8.8 0 0 1 1.1 0l1.6 1.6a.8.8 0 0 1 0 1.1l-1 1z" fill="#222"/></svg><svg class="ic-del" viewBox="0 0 14 14"><path d="M1.800 4h10.400l-.7 9.500h-9z" fill="#eaeaea" stroke="#a2a2a2" stroke-width="1.200"/><path d="M0 3h14" stroke="#8c8c8c" stroke-width="2"/><path d="M4.800 2.500V.8h4.400v1.700" fill="none" stroke="#8c8c8c" stroke-width="1.200"/><path d="M5.200 6v5.500M8.800 6v5.500" stroke="#a8a8a8" stroke-width="1.200"/></svg></div></td></tr>
<tr><td><div class="cell ops"><svg class="ic-pen" viewBox="0 0 16 16"><path d="M1.5 14.5l.9-3.6 8.2-8.2 2.7 2.7-8.2 8.2zM11.4 1.9l1-1a.8.8 0 0 1 1.1 0l1.6 1.6a.8.8 0 0 1 0 1.1l-1 1z" fill="#222"/></svg><svg class="ic-del" viewBox="0 0 14 14"><path d="M1.800 4h10.400l-.7 9.500h-9z" fill="#eaeaea" stroke="#a2a2a2" stroke-width="1.200"/><path d="M0 3h14" stroke="#8c8c8c" stroke-width="2"/><path d="M4.800 2.500V.8h4.400v1.700" fill="none" stroke="#8c8c8c" stroke-width="1.200"/><path d="M5.200 6v5.500M8.800 6v5.500" stroke="#a8a8a8" stroke-width="1.200"/></svg></div></td></tr>
<tr><td><div class="cell ops"><svg class="ic-pen" viewBox="0 0 16 16"><path d="M1.5 14.5l.9-3.6 8.2-8.2 2.7 2.7-8.2 8.2zM11.4 1.9l1-1a.8.8 0 0 1 1.1 0l1.6 1.6a.8.8 0 0 1 0 1.1l-1 1z" fill="#222"/></svg><svg class="ic-del" viewBox="0 0 14 14"><path d="M1.800 4h10.400l-.7 9.500h-9z" fill="#eaeaea" stroke="#a2a2a2" stroke-width="1.200"/><path d="M0 3h14" stroke="#8c8c8c" stroke-width="2"/><path d="M4.800 2.500V.8h4.400v1.700" fill="none" stroke="#8c8c8c" stroke-width="1.200"/><path d="M5.200 6v5.500M8.800 6v5.500" stroke="#a8a8a8" stroke-width="1.200"/></svg></div></td></tr>
<tr><td><div class="cell ops"><svg class="ic-pen" viewBox="0 0 16 16"><path d="M1.5 14.5l.9-3.6 8.2-8.2 2.7 2.7-8.2 8.2zM11.4 1.9l1-1a.8.8 0 0 1 1.1 0l1.6 1.6a.8.8 0 0 1 0 1.1l-1 1z" fill="#222"/></svg><svg class="ic-del" viewBox="0 0 14 14"><path d="M1.800 4h10.400l-.7 9.500h-9z" fill="#eaeaea" stroke="#a2a2a2" stroke-width="1.200"/><path d="M0 3h14" stroke="#8c8c8c" stroke-width="2"/><path d="M4.800 2.500V.8h4.400v1.700" fill="none" stroke="#8c8c8c" stroke-width="1.200"/><path d="M5.200 6v5.500M8.800 6v5.500" stroke="#a8a8a8" stroke-width="1.200"/></svg></div></td></tr>
<tr><td><div class="cell ops"><svg class="ic-pen" viewBox="0 0 16 16"><path d="M1.5 14.5l.9-3.6 8.2-8.2 2.7 2.7-8.2 8.2zM11.4 1.9l1-1a.8.8 0 0 1 1.1 0l1.6 1.6a.8.8 0 0 1 0 1.1l-1 1z" fill="#222"/></svg><svg class="ic-del" viewBox="0 0 14 14"><path d="M1.800 4h10.400l-.7 9.500h-9z" fill="#eaeaea" stroke="#a2a2a2" stroke-width="1.200"/><path d="M0 3h14" stroke="#8c8c8c" stroke-width="2"/><path d="M4.800 2.500V.8h4.400v1.700" fill="none" stroke="#8c8c8c" stroke-width="1.200"/><path d="M5.200 6v5.500M8.800 6v5.500" stroke="#a8a8a8" stroke-width="1.200"/></svg></div></td></tr>
<tr><td><div class="cell ops"><svg class="ic-pen" viewBox="0 0 16 16"><path d="M1.5 14.5l.9-3.6 8.2-8.2 2.7 2.7-8.2 8.2zM11.4 1.9l1-1a.8.8 0 0 1 1.1 0l1.6 1.6a.8.8 0 0 1 0 1.1l-1 1z" fill="#222"/></svg><svg class="ic-del" viewBox="0 0 14 14"><path d="M1.800 4h10.400l-.7 9.500h-9z" fill="#eaeaea" stroke="#a2a2a2" stroke-width="1.200"/><path d="M0 3h14" stroke="#8c8c8c" stroke-width="2"/><path d="M4.800 2.500V.8h4.400v1.700" fill="none" stroke="#8c8c8c" stroke-width="1.200"/><path d="M5.200 6v5.500M8.800 6v5.500" stroke="#a8a8a8" stroke-width="1.200"/></svg></div></td></tr>
<tr><td><div class="cell ops"><svg class="ic-pen" viewBox="0 0 16 16"><path d="M1.5 14.5l.9-3.6 8.2-8.2 2.7 2.7-8.2 8.2zM11.4 1.9l1-1a.8.8 0 0 1 1.1 0l1.6 1.6a.8.8 0 0 1 0 1.1l-1 1z" fill="#222"/></svg><svg class="ic-del" viewBox="0 0 14 14"><path d="M1.800 4h10.400l-.7 9.500h-9z" fill="#eaeaea" stroke="#a2a2a2" stroke-width="1.200"/><path d="M0 3h14" stroke="#8c8c8c" stroke-width="2"/><path d="M4.800 2.500V.8h4.400v1.700" fill="none" stroke="#8c8c8c" stroke-width="1.200"/><path d="M5.200 6v5.500M8.800 6v5.500" stroke="#a8a8a8" stroke-width="1.200"/></svg></div></td></tr>
<tr><td><div class="cell ops"><svg class="ic-pen" viewBox="0 0 16 16"><path d="M1.5 14.5l.9-3.6 8.2-8.2 2.7 2.7-8.2 8.2zM11.4 1.9l1-1a.8.8 0 0 1 1.1 0l1.6 1.6a.8.8 0 0 1 0 1.1l-1 1z" fill="#222"/></svg><svg class="ic-del" viewBox="0 0 14 14"><path d="M1.800 4h10.400l-.7 9.500h-9z" fill="#eaeaea" stroke="#a2a2a2" stroke-width="1.200"/><path d="M0 3h14" stroke="#8c8c8c" stroke-width="2"/><path d="M4.800 2.500V.8h4.400v1.700" fill="none" stroke="#8c8c8c" stroke-width="1.200"/><path d="M5.200 6v5.500M8.800 6v5.500" stroke="#a8a8a8" stroke-width="1.200"/></svg></div></td></tr>
<tr><td><div class="cell ops"><svg class="ic-pen" viewBox="0 0 16 16"><path d="M1.5 14.5l.9-3.6 8.2-8.2 2.7 2.7-8.2 8.2zM11.4 1.9l1-1a.8.8 0 0 1 1.1 0l1.6 1.6a.8.8 0 0 1 0 1.1l-1 1z" fill="#222"/></svg><svg class="ic-del" viewBox="0 0 14 14"><path d="M1.800 4h10.400l-.7 9.500h-9z" fill="#eaeaea" stroke="#a2a2a2" stroke-width="1.200"/><path d="M0 3h14" stroke="#8c8c8c" stroke-width="2"/><path d="M4.800 2.500V.8h4.400v1.700" fill="none" stroke="#8c8c8c" stroke-width="1.200"/><path d="M5.200 6v5.500M8.800 6v5.500" stroke="#a8a8a8" stroke-width="1.200"/></svg></div></td></tr>
<tr><td><div class="cell ops"><svg class="ic-pen" viewBox="0 0 16 16"><path d="M1.5 14.5l.9-3.6 8.2-8.2 2.7 2.7-8.2 8.2zM11.4 1.9l1-1a.8.8 0 0 1 1.1 0l1.6 1.6a.8.8 0 0 1 0 1.1l-1 1z" fill="#222"/></svg><svg class="ic-del" viewBox="0 0 14 14"><path d="M1.800 4h10.400l-.7 9.500h-9z" fill="#eaeaea" stroke="#a2a2a2" stroke-width="1.200"/><path d="M0 3h14" stroke="#8c8c8c" stroke-width="2"/><path d="M4.800 2.500V.8h4.400v1.700" fill="none" stroke="#8c8c8c" stroke-width="1.200"/><path d="M5.200 6v5.500M8.800 6v5.500" stroke="#a8a8a8" stroke-width="1.200"/></svg></div></td></tr>
<tr><td><div class="cell ops"><svg class="ic-pen" viewBox="0 0 16 16"><path d="M1.5 14.5l.9-3.6 8.2-8.2 2.7 2.7-8.2 8.2zM11.4 1.9l1-1a.8.8 0 0 1 1.1 0l1.6 1.6a.8.8 0 0 1 0 1.1l-1 1z" fill="#222"/></svg><svg class="ic-del" viewBox="0 0 14 14"><path d="M1.800 4h10.400l-.7 9.500h-9z" fill="#eaeaea" stroke="#a2a2a2" stroke-width="1.200"/><path d="M0 3h14" stroke="#8c8c8c" stroke-width="2"/><path d="M4.800 2.500V.8h4.400v1.700" fill="none" stroke="#8c8c8c" stroke-width="1.200"/><path d="M5.200 6v5.500M8.800 6v5.500" stroke="#a8a8a8" stroke-width="1.200"/></svg></div></td></tr>
<tr><td><div class="cell ops"><svg class="ic-pen" viewBox="0 0 16 16"><path d="M1.5 14.5l.9-3.6 8.2-8.2 2.7 2.7-8.2 8.2zM11.4 1.9l1-1a.8.8 0 0 1 1.1 0l1.6 1.6a.8.8 0 0 1 0 1.1l-1 1z" fill="#222"/></svg><svg class="ic-del" viewBox="0 0 14 14"><path d="M1.800 4h10.400l-.7 9.500h-9z" fill="#eaeaea" stroke="#a2a2a2" stroke-width="1.200"/><path d="M0 3h14" stroke="#8c8c8c" stroke-width="2"/><path d="M4.800 2.500V.8h4.400v1.700" fill="none" stroke="#8c8c8c" stroke-width="1.200"/><path d="M5.200 6v5.500M8.800 6v5.500" stroke="#a8a8a8" stroke-width="1.200"/></svg></div></td></tr></tbody></table></div>
</div>

<!-- footer -->
<div id="foot">
  <span class="cp">Copyright ©2018-©2022 ok-admin v2.0 All Rights Reserved</span>
  <span class="fb" style="left:957px;width:58px">捐赠作者</span>
  <span class="fb" style="left:1029px;width:65px">QQ群交流</span>
</div>

</div>
</body>
</html>
